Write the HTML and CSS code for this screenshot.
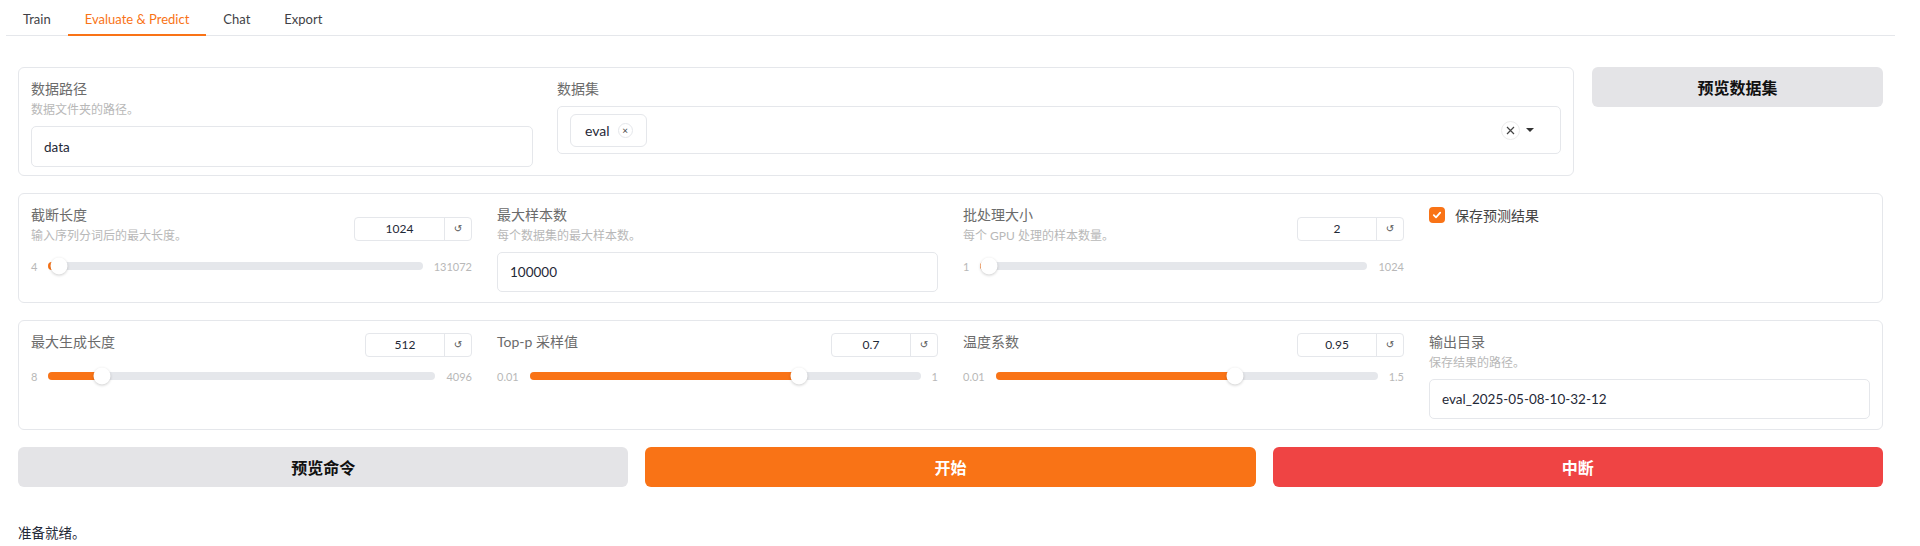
FILE: index.html
```html
<!DOCTYPE html>
<html lang="zh">
<head>
    <meta charset="UTF-8">
    <title>Evaluate &amp; Predict</title>
    <link rel="stylesheet" href="styles.css">
</head>
<body>
    <!-- Tab bar -->
    <div class="tabs">
        <div class="tab">Train</div>
        <div class="tab active">Evaluate &amp; Predict</div>
        <div class="tab">Chat</div>
        <div class="tab">Export</div>
    </div>

    <div class="page">
        <!-- Dataset row -->
        <div class="top-row">
            <div class="card card-data">
                <div class="field field-dir">
                    <div class="label">数据路径</div>
                    <div class="info">数据文件夹的路径。</div>
                    <div class="textbox">data</div>
                </div>
                <div class="field field-dataset">
                    <div class="label">数据集</div>
                    <div class="dropdown">
                        <div class="tag">eval <span class="tag-x">×</span></div>
                        <div class="dd-icons">
                            <span class="clear">
                                <svg width="9" height="9" viewBox="0 0 9 9"><path d="M1 1L8 8M8 1L1 8" stroke="#444" stroke-width="1.2" fill="none"/></svg>
                            </span>
                            <span class="caret"></span>
                        </div>
                    </div>
                </div>
            </div>
            <div class="side">
                <button class="btn btn-gray btn-side">预览数据集</button>
            </div>
        </div>

        <!-- Sampling row -->
        <div class="card params">
            <div class="slider">
                <div class="slider-head">
                    <div>
                        <div class="label">截断长度</div>
                        <div class="info">输入序列分词后的最大长度。</div>
                    </div>
                    <div class="numbox wide shifted"><span class="num">1024</span><span class="reset">↺</span></div>
                </div>
                <div class="slider-row">
                    <span>4</span>
                    <div class="track">
                        <div class="fill" style="width: calc(8px + (100% - 16px) * 0.0078)"></div>
                        <div class="thumb" style="left: calc(8px + (100% - 16px) * 0.0078)"></div>
                    </div>
                    <span>131072</span>
                </div>
            </div>
            <div class="field">
                <div class="label">最大样本数</div>
                <div class="info">每个数据集的最大样本数。</div>
                <div class="textbox tb-40">100000</div>
            </div>
            <div class="slider">
                <div class="slider-head">
                    <div>
                        <div class="label">批处理大小</div>
                        <div class="info">每个 GPU 处理的样本数量。</div>
                    </div>
                    <div class="numbox shifted"><span class="num">2</span><span class="reset">↺</span></div>
                </div>
                <div class="slider-row">
                    <span>1</span>
                    <div class="track">
                        <div class="fill" style="width: calc(8px + (100% - 16px) * 0.001)"></div>
                        <div class="thumb" style="left: calc(8px + (100% - 16px) * 0.001)"></div>
                    </div>
                    <span>1024</span>
                </div>
            </div>
            <div class="check">
                <span class="cb">
                    <svg width="10" height="10" viewBox="0 0 10 10"><path d="M1.8 5.2L4 7.3L8.2 2.6" stroke="#fff" stroke-width="1.8" fill="none" stroke-linecap="round" stroke-linejoin="round"/></svg>
                </span>
                <span class="check-label">保存预测结果</span>
            </div>
        </div>

        <!-- Generation row -->
        <div class="card params">
            <div class="slider">
                <div class="slider-head">
                    <div class="label">最大生成长度</div>
                    <div class="numbox"><span class="num">512</span><span class="reset">↺</span></div>
                </div>
                <div class="slider-row">
                    <span>8</span>
                    <div class="track">
                        <div class="fill" style="width: calc(8px + (100% - 16px) * 0.1233)"></div>
                        <div class="thumb" style="left: calc(8px + (100% - 16px) * 0.1233)"></div>
                    </div>
                    <span>4096</span>
                </div>
            </div>
            <div class="slider">
                <div class="slider-head">
                    <div class="label">Top-p 采样值</div>
                    <div class="numbox"><span class="num">0.7</span><span class="reset">↺</span></div>
                </div>
                <div class="slider-row">
                    <span>0.01</span>
                    <div class="track">
                        <div class="fill" style="width: calc(8px + (100% - 16px) * 0.697)"></div>
                        <div class="thumb" style="left: calc(8px + (100% - 16px) * 0.697)"></div>
                    </div>
                    <span>1</span>
                </div>
            </div>
            <div class="slider">
                <div class="slider-head">
                    <div class="label">温度系数</div>
                    <div class="numbox"><span class="num">0.95</span><span class="reset">↺</span></div>
                </div>
                <div class="slider-row">
                    <span>0.01</span>
                    <div class="track">
                        <div class="fill" style="width: calc(8px + (100% - 16px) * 0.631)"></div>
                        <div class="thumb" style="left: calc(8px + (100% - 16px) * 0.631)"></div>
                    </div>
                    <span>1.5</span>
                </div>
            </div>
            <div class="field">
                <div class="label">输出目录</div>
                <div class="info">保存结果的路径。</div>
                <div class="textbox tb-40">eval_2025-05-08-10-32-12</div>
            </div>
        </div>

        <!-- Action buttons -->
        <div class="actions">
            <button class="btn btn-gray">预览命令</button>
            <button class="btn btn-orange">开始</button>
            <button class="btn btn-red">中断</button>
        </div>

        <div class="status">准备就绪。</div>
    </div>
</body>
</html>
```

FILE: styles.css
```css
/* Basic reset */
* {
    margin: 0;
    padding: 0;
    box-sizing: border-box;
}

body {
    background-color: #FFFFFF;
    font-family: 'Lato', 'Noto Sans CJK SC', sans-serif;
    color: #27272a;
}

/* Tabs */
.tabs {
    display: flex;
    margin: 0 25px 0 6px;
    height: 36px;
    border-bottom: 1px solid #e5e7eb;
}

.tab {
    height: 36px;
    margin-bottom: -1px;
    padding: 5px 17px 0;
    line-height: 29px;
    font-size: 13px;
    color: #3f3f46;
}

.tab.active {
    color: #f97316;
    border-bottom: 2px solid #f97316;
}

/* Page layout */
.page {
    display: flex;
    flex-direction: column;
    gap: 17px;
    padding: 31px 37px 0 18px;
}

.top-row {
    display: flex;
    gap: 18px;
    align-items: flex-start;
}

.card {
    background: #FFFFFF;
    border: 1px solid #e5e7eb;
    border-radius: 6px;
}

.card-data {
    flex: 1;
    display: flex;
    padding: 12px 12px 8px 12px;
}

.field-dir {
    width: 502px;
}

.field-dataset {
    flex: 1;
    margin-left: 24px;
}

.side {
    width: 291px;
}

/* Labels */
.label {
    font-size: 14px;
    line-height: 18px;
    color: #6b6b6b;
    white-space: nowrap;
}

.info {
    margin-top: 4px;
    font-size: 12px;
    line-height: 16px;
    color: #b8b8b8;
    white-space: nowrap;
}

/* Text inputs */
.textbox {
    margin-top: 8px;
    height: 41px;
    padding: 0 12px;
    display: flex;
    align-items: center;
    border: 1px solid #e5e7eb;
    border-radius: 5px;
    font-size: 13.5px;
    color: #1f2937;
}

.tb-40 {
    height: 40px;
}

/* Dropdown */
.dropdown {
    margin-top: 8px;
    height: 48px;
    padding: 0 26px 0 12px;
    display: flex;
    align-items: center;
    border: 1px solid #e5e7eb;
    border-radius: 5px;
}

.tag {
    height: 33px;
    padding: 0 13px 0 14px;
    display: flex;
    align-items: center;
    gap: 8px;
    border: 1px solid #e5e7eb;
    border-radius: 6px;
    font-size: 14px;
    color: #1f2937;
}

.tag-x {
    width: 15px;
    height: 15px;
    display: flex;
    align-items: center;
    justify-content: center;
    border: 1px solid #e5e7eb;
    border-radius: 50%;
    font-size: 10px;
    color: #444;
}

.dd-icons {
    margin-left: auto;
    display: flex;
    align-items: center;
    gap: 6px;
}

.clear {
    width: 19px;
    height: 19px;
    display: flex;
    align-items: center;
    justify-content: center;
    border: 1px solid #ececec;
    border-radius: 50%;
}

.caret {
    width: 0;
    height: 0;
    border-left: 4px solid transparent;
    border-right: 4px solid transparent;
    border-top: 4px solid #333;
}

/* Parameter grids */
.params {
    display: grid;
    grid-template-columns: repeat(4, 441px);
    column-gap: 25px;
    padding: 12px 12px 10px 12px;
}

.slider-head {
    display: flex;
    justify-content: space-between;
    align-items: flex-start;
}

.slider .info {
    margin-bottom: 3px;
}

.numbox {
    width: 107px;
    height: 24px;
    display: flex;
    border: 1px solid #e5e7eb;
    border-radius: 4px;
    font-size: 12px;
    color: #1f2937;
}

.numbox.wide {
    width: 118px;
}

.numbox.shifted {
    margin-top: 11px;
}

.num {
    flex: 1;
    text-align: center;
    line-height: 22px;
}

.reset {
    width: 27px;
    border-left: 1px solid #e5e7eb;
    text-align: center;
    line-height: 22px;
    font-family: 'DejaVu Sans', sans-serif;
    font-size: 10px;
    color: #555;
}

.slider-row {
    margin-top: 11px;
    height: 16px;
    display: flex;
    align-items: center;
    gap: 11px;
    font-size: 11px;
    color: #b8b8b8;
}

.track {
    position: relative;
    flex: 1;
    height: 8px;
    background: #e5e7eb;
    border-radius: 4px;
}

.fill {
    position: absolute;
    left: 0;
    top: 0;
    bottom: 0;
    background: #f97316;
    border-radius: 4px;
}

.thumb {
    position: absolute;
    top: 50%;
    width: 17px;
    height: 17px;
    border-radius: 50%;
    background: #FFFFFF;
    box-shadow: 0 1px 3px rgba(0, 0, 0, 0.2);
    transform: translate(-50%, -50%);
}

/* Checkbox */
.check {
    display: flex;
    align-items: center;
    gap: 10px;
    height: 18px;
}

.cb {
    width: 16px;
    height: 16px;
    display: flex;
    align-items: center;
    justify-content: center;
    background: #f97316;
    border-radius: 4px;
}

.check-label {
    font-size: 14px;
    color: #444;
}

/* Buttons */
.btn {
    height: 40px;
    border: none;
    border-radius: 6px;
    font-family: 'Lato', 'Noto Sans CJK SC', sans-serif;
    font-size: 16px;
    font-weight: bold;
}

.btn-side {
    width: 100%;
}

.btn-gray {
    background-color: #e4e4e7;
    color: #111;
}

.btn-orange {
    background-color: #f97316;
    color: #FFFFFF;
}

.btn-red {
    background-color: #ef4444;
    color: #FFFFFF;
}

.actions {
    display: grid;
    grid-template-columns: repeat(3, 1fr);
    gap: 17px;
}

.status {
    margin-top: 19px;
    font-size: 13.5px;
    line-height: 20px;
    color: #1f2937;
}
```
